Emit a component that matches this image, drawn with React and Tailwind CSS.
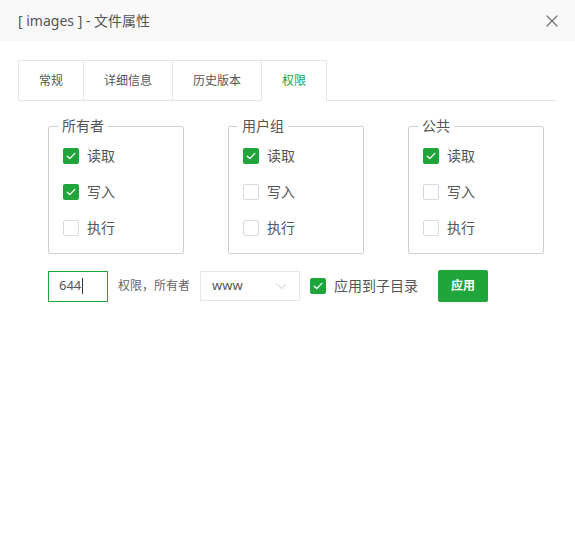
import React from "react";

const font = { fontFamily: '"Noto Sans", "Noto Sans CJK SC", sans-serif' };

function Check({ checked }) {
  if (checked) {
    return (
      <span className="flex h-[16px] w-[16px] shrink-0 items-center justify-center rounded-[2px] bg-[#20a53a]">
        <svg width="10" height="8" viewBox="0 0 10 8" fill="none">
          <path d="M1.2 4.2 L3.8 6.6 L8.8 1.4" stroke="#fff" strokeWidth="1.3" strokeLinecap="round" strokeLinejoin="round" />
        </svg>
      </span>
    );
  }
  return <span className="block h-[16px] w-[16px] shrink-0 rounded-[2px] border border-[#d9d9d9] bg-white" />;
}

function Group({ title, values }) {
  const labels = ["读取", "写入", "执行"];
  return (
    <div className="w-[180px] shrink-0 pl-[30px]">
      <fieldset className="w-[136px] rounded-[2px] border border-[#cfcfcf] pb-[7px]">
        <legend className="ml-[9px] px-[4px] text-[14px] leading-[20px] text-[#555]">{title}</legend>
        <div className="flex flex-col pt-[2px] pl-[14px]">
          {labels.map((l, i) => (
            <div key={l} className="flex h-[36px] items-center gap-[8px]">
              <Check checked={values[i]} />
              <span className="text-[14px] leading-[20px] text-[#555]">{l}</span>
            </div>
          ))}
        </div>
      </fieldset>
    </div>
  );
}

export default function App() {
  const tabs = ["常规", "详细信息", "历史版本", "权限"];
  return (
    <div className="h-[535px] w-[575px] bg-white" style={font}>
      <div className="flex h-[41px] items-center justify-between bg-[#f8f8f8] pl-[18px] pr-[17px]">
        <span className="text-[14px] leading-[20px] text-[#555]">[ images ] - 文件属性</span>
        <svg width="12" height="12" viewBox="0 0 12 12" fill="none">
          <path d="M1 1 L11 11 M11 1 L1 11" stroke="#777" strokeWidth="1.4" strokeLinecap="round" />
        </svg>
      </div>

      <div className="mx-[18px] mt-[19px] flex border-b border-[#e6e6e6]">
        {tabs.map((t, i) => {
          const active = i === 3;
          return (
            <div
              key={t}
              className={
                active
                  ? "-mb-px flex h-[41px] items-center border-t border-r border-[#e6e6e6] bg-white px-[20px] text-[12px] text-[#20a53a]"
                  : i === 0
                  ? "flex h-[40px] items-center border-t border-l border-r border-[#e6e6e6] px-[20px] text-[12px] text-[#555]"
                  : "flex h-[40px] items-center border-t border-r border-[#e6e6e6] px-[20px] text-[12px] text-[#555]"
              }
            >
              {t}
            </div>
          );
        })}
      </div>

      <div className="mx-[18px] mt-[15px] flex">
        <Group title="所有者" values={[true, true, false]} />
        <Group title="用户组" values={[true, false, false]} />
        <Group title="公共" values={[true, false, false]} />
      </div>

      <div className="ml-[48px] mt-[16px] flex items-center">
        <div className="flex h-[31px] w-[60px] items-center border border-[#20a53a] pl-[10px] text-[13px] text-[#555]">
          <span>644</span>
          <span className="ml-px block h-[16px] w-px bg-[#333]" />
        </div>
        <span className="ml-[10px] w-[72px] text-[12px] leading-[20px] text-[#666]">权限，所有者</span>
        <div className="ml-[10px] flex h-[30px] w-[100px] items-center justify-between border border-[#e6e6e6] pl-[11px] pr-[12px]">
          <span className="text-[13px] text-[#555]">www</span>
          <svg width="11" height="7" viewBox="0 0 11 7" fill="none">
            <path d="M0.8 0.8 L5.5 5.6 L10.2 0.8" stroke="#c8c8c8" strokeWidth="1" />
          </svg>
        </div>
        <div className="ml-[10px] flex items-center gap-[8px]">
          <Check checked />
          <span className="text-[14px] leading-[20px] text-[#555]">应用到子目录</span>
        </div>
        <button className="ml-[20px] flex h-[32px] w-[50px] items-center justify-center rounded-[2px] bg-[#20a53a] text-[12px] font-bold text-white">
          应用
        </button>
      </div>
    </div>
  );
}
